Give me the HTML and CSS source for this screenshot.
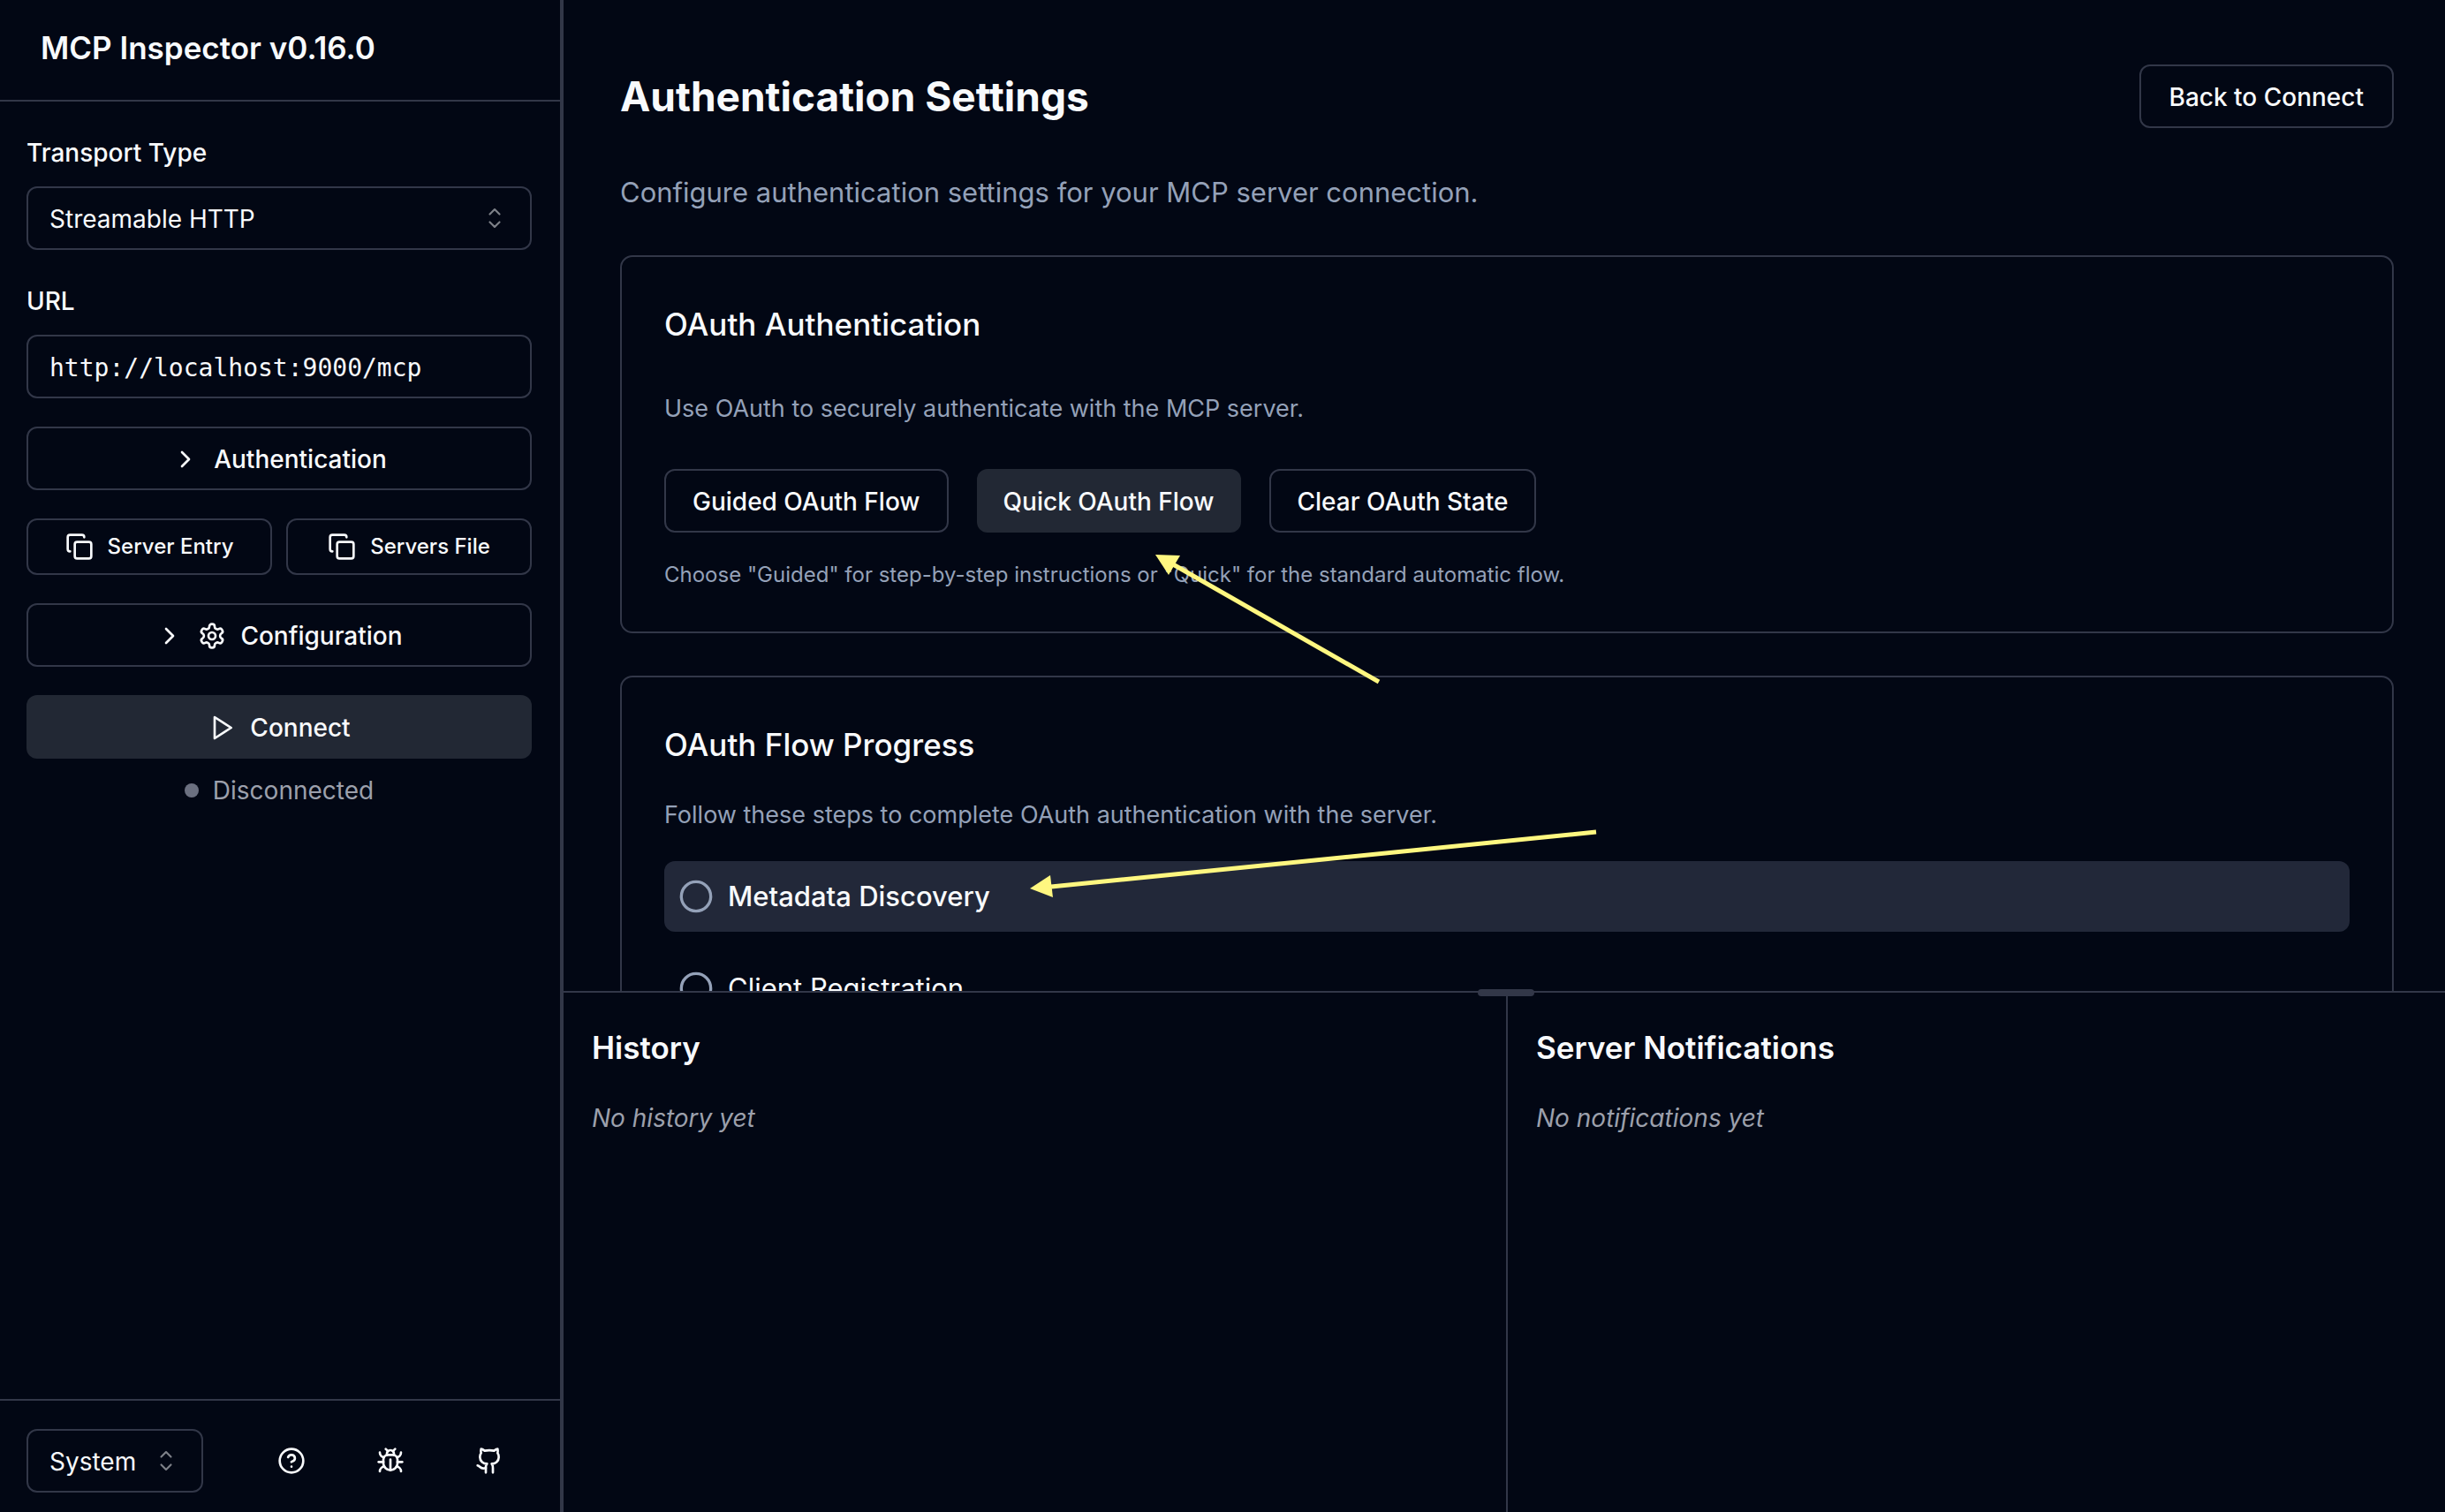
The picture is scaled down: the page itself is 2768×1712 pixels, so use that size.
FILE: index.html
```html
<!DOCTYPE html>
<html lang="en">
<head>
<meta charset="utf-8">
<title>MCP Inspector</title>
<meta name="viewport" content="width=device-width, initial-scale=1">
<link rel="stylesheet" href="styles.css">
</head>
<body>
<svg class="sprite" aria-hidden="true">
  <symbol id="i-chevron" viewBox="0 0 24 24"><path d="m9 18 6-6-6-6"/></symbol>
  <symbol id="i-copy" viewBox="0 0 24 24"><rect width="14" height="14" x="8" y="8" rx="2" ry="2"/><path d="M4 16c-1.1 0-2-.9-2-2V4c0-1.1.9-2 2-2h10c1.1 0 2 .9 2 2"/></symbol>
  <symbol id="i-settings" viewBox="0 0 24 24"><path d="M12.22 2h-.44a2 2 0 0 0-2 2v.18a2 2 0 0 1-1 1.73l-.43.25a2 2 0 0 1-2 0l-.15-.08a2 2 0 0 0-2.73.73l-.22.38a2 2 0 0 0 .73 2.73l.15.1a2 2 0 0 1 1 1.72v.51a2 2 0 0 1-1 1.74l-.15.09a2 2 0 0 0-.73 2.73l.22.38a2 2 0 0 0 2.73.73l.15-.08a2 2 0 0 1 2 0l.43.25a2 2 0 0 1 1 1.73V20a2 2 0 0 0 2 2h.44a2 2 0 0 0 2-2v-.18a2 2 0 0 1 1-1.73l.43-.25a2 2 0 0 1 2 0l.15.08a2 2 0 0 0 2.73-.73l.22-.39a2 2 0 0 0-.73-2.73l-.15-.08a2 2 0 0 1-1-1.74v-.5a2 2 0 0 1 1-1.74l.15-.09a2 2 0 0 0 .73-2.73l-.22-.38a2 2 0 0 0-2.73-.73l-.15.08a2 2 0 0 1-2 0l-.43-.25a2 2 0 0 1-1-1.73V4a2 2 0 0 0-2-2z"/><circle cx="12" cy="12" r="3"/></symbol>
  <symbol id="i-play" viewBox="0 0 24 24"><polygon points="6 3 20 12 6 21 6 3"/></symbol>
  <symbol id="i-help" viewBox="0 0 24 24"><circle cx="12" cy="12" r="10"/><path d="M9.09 9a3 3 0 0 1 5.83 1c0 2-3 3-3 3"/><path d="M12 17h.01"/></symbol>
  <symbol id="i-bug" viewBox="0 0 24 24"><path d="m8 2 1.88 1.88"/><path d="M14.12 3.88 16 2"/><path d="M9 7.13v-1a3.003 3.003 0 1 1 6 0v1"/><path d="M12 20c-3.3 0-6-2.7-6-6v-3a4 4 0 0 1 4-4h4a4 4 0 0 1 4 4v3c0 3.3-2.7 6-6 6"/><path d="M12 20v-9"/><path d="M6.53 9C4.6 8.8 3 7.1 3 5"/><path d="M6 13H2"/><path d="M3 21c0-2.1 1.7-3.9 3.8-4"/><path d="M20.97 5c0 2.1-1.6 3.8-3.5 4"/><path d="M22 13h-4"/><path d="M17.2 17c2.1.1 3.8 1.9 3.8 4"/></symbol>
  <symbol id="i-github" viewBox="0 0 24 24"><path d="M15 22v-4a4.8 4.8 0 0 0-1-3.5c3 0 6-2 6-5.5.08-1.25-.27-2.48-1-3.5.28-1.15.28-2.35 0-3.5 0 0-1 0-3 1.5-2.64-.5-5.36-.5-8 0C6 2 5 2 5 2c-.3 1.15-.3 2.35 0 3.5A5.403 5.403 0 0 0 4 9c0 3.5 3 5.5 6 5.5-.39.49-.68 1.05-.85 1.65-.17.6-.22 1.23-.15 1.85v4"/><path d="M9 18c-4.51 2-5-2-7-2"/></symbol>
  <symbol id="i-circle" viewBox="0 0 24 24"><circle cx="12" cy="12" r="10"/></symbol>
  <symbol id="i-sort" viewBox="0 0 15 15"><path d="M4.93 5.43 7.5 2.86l2.57 2.57M4.93 9.57l2.57 2.57 2.57-2.57"/></symbol>
</svg>

<div class="app">
  <aside class="sidebar">
    <header class="sidebar-header"><h1 class="brand">MCP Inspector v0.16.0</h1></header>

    <div class="sidebar-body">
      <div class="field">
        <label class="label" for="transport">Transport Type</label>
        <div class="select-wrap">
          <select class="control" id="transport"><option>Streamable HTTP</option><option>SSE</option><option>STDIO</option></select>
          <svg class="sort"><use href="#i-sort"/></svg>
        </div>
      </div>
      <div class="field">
        <label class="label" for="url">URL</label>
        <input class="control mono" id="url" type="text" value="http://localhost:9000/mcp">
      </div>
      <button class="btn wide" type="button"><svg class="icon"><use href="#i-chevron"/></svg>Authentication</button>
      <div class="pair">
        <button class="btn small" type="button"><svg class="icon"><use href="#i-copy"/></svg>Server Entry</button>
        <button class="btn small" type="button"><svg class="icon"><use href="#i-copy"/></svg>Servers File</button>
      </div>
      <button class="btn wide" type="button"><svg class="icon"><use href="#i-chevron"/></svg><svg class="icon"><use href="#i-settings"/></svg>Configuration</button>
      <div class="connect">
        <button class="btn primary wide" type="button"><svg class="icon"><use href="#i-play"/></svg>Connect</button>
        <p class="status"><span class="dot"></span>Disconnected</p>
      </div>
    </div>

    <footer class="sidebar-footer">
      <div class="select-wrap theme">
        <select class="control" aria-label="Theme"><option>System</option><option>Light</option><option>Dark</option></select>
        <svg class="sort"><use href="#i-sort"/></svg>
      </div>
      <nav class="links">
        <a class="icon-link" href="#help" aria-label="Help"><svg class="icon"><use href="#i-help"/></svg></a>
        <a class="icon-link" href="#debug" aria-label="Debugging guide"><svg class="icon"><use href="#i-bug"/></svg></a>
        <a class="icon-link" href="#github" aria-label="GitHub"><svg class="icon"><use href="#i-github"/></svg></a>
      </nav>
    </footer>
  </aside>

  <main class="main">
    <section class="settings">
      <div class="settings-head">
        <h2 class="title">Authentication Settings</h2>
        <button class="btn" type="button">Back to Connect</button>
      </div>
      <p class="lead">Configure authentication settings for your MCP server connection.</p>

      <article class="card oauth">
        <h3 class="card-title">OAuth Authentication</h3>
        <p class="desc">Use OAuth to securely authenticate with the MCP server.</p>
        <div class="actions">
          <button class="btn" type="button">Guided OAuth Flow</button>
          <button class="btn primary" type="button">Quick OAuth Flow</button>
          <button class="btn" type="button">Clear OAuth State</button>
        </div>
        <p class="hint">Choose "Guided" for step-by-step instructions or "Quick" for the standard automatic flow.</p>
      </article>

      <article class="card progress">
        <h3 class="card-title">OAuth Flow Progress</h3>
        <p class="desc">Follow these steps to complete OAuth authentication with the server.</p>
        <ol class="steps">
          <li class="step current"><svg class="step-icon"><use href="#i-circle"/></svg>Metadata Discovery</li>
          <li class="step"><svg class="step-icon"><use href="#i-circle"/></svg>Client Registration</li>
        </ol>
      </article>

      <svg class="arrows" viewBox="0 0 1200 1120" aria-hidden="true">
        <path class="shaft" d="M923 772 690 639"/>
        <path class="head" d="M670 628 698 629 685 651Z"/>
        <path class="shaft" d="M1169 942 552 1004"/>
        <path class="head" d="M528 1006 551 991 554 1016Z"/>
      </svg>
    </section>

    <div class="bottom">
      <div class="handle"></div>
      <section class="panel">
        <h2 class="panel-title">History</h2>
        <p class="empty">No history yet</p>
      </section>
      <section class="panel">
        <h2 class="panel-title">Server Notifications</h2>
        <p class="empty">No notifications yet</p>
      </section>
    </div>
  </main>
</div>
</body>
</html>
```
FILE: styles.css
```css
:root {
  --bg: #020714;
  --border: #323748;
  --text: #f8fafc;
  --muted: #94a1b8;
  --gray: #9ca0ac;
  --fill: #222834;
  --accent: #222839;
  --arrow: #fff780;
}

* { box-sizing: border-box; margin: 0; }

body {
  background: var(--bg);
  color: var(--text);
  font: 400 28px/40px Inter, "Liberation Sans", sans-serif;
}

button, select, input { font: inherit; color: inherit; }

.sprite { position: absolute; width: 0; height: 0; }

svg { fill: none; stroke: currentColor; stroke-width: 2; stroke-linecap: round; stroke-linejoin: round; }

.app { display: flex; height: 100vh; overflow: hidden; }

/* Sidebar */
.sidebar {
  display: flex;
  flex-direction: column;
  flex: none;
  width: 638px;
  border-right: 4px solid var(--border);
}
.sidebar-header { padding: 26px 46px 31px; border-bottom: 2px solid var(--border); }
.brand { font-size: 35px; line-height: 56px; font-weight: 600; }
.sidebar-body {
  flex: 1;
  display: flex;
  flex-direction: column;
  gap: 32px;
  padding: 32px 32px 32px 30px;
}
.field { display: flex; flex-direction: column; gap: 18px; padding-top: 6px; }
.label { font-weight: 500; }

.control {
  width: 100%;
  height: 72px;
  padding: 2px 24px 0;
  border: 2px solid var(--border);
  border-radius: 12px;
  background: transparent;
  appearance: none;
}
.mono { font-family: "DejaVu Sans Mono", monospace; }
.select-wrap { position: relative; }
.sort {
  position: absolute;
  right: 26px;
  top: 20px;
  width: 32px;
  height: 32px;
  stroke-width: 1;
  opacity: 0.5;
}

.btn {
  display: flex;
  align-items: center;
  justify-content: center;
  gap: 16px;
  height: 72px;
  padding: 2px 32px 0;
  border: 2px solid var(--border);
  border-radius: 12px;
  background: transparent;
  font-weight: 500;
  white-space: nowrap;
}
.wide { width: 100%; }
.small { flex: 1; height: 64px; padding: 0; font-size: 24px; }
.primary { background: var(--fill); border: 0; }
.icon { width: 32px; height: 32px; flex: none; }
.pair { display: flex; gap: 16px; }
.connect { display: flex; flex-direction: column; gap: 16px; }
.status { display: flex; align-items: center; justify-content: center; gap: 16px; color: var(--gray); }
.dot { width: 16px; height: 16px; border-radius: 50%; background: #6b7080; }

.sidebar-footer {
  display: flex;
  align-items: center;
  gap: 64px;
  padding: 32px 32px 22px 30px;
  border-top: 2px solid var(--border);
}
.theme { width: 200px; }
.links { display: flex; gap: 40px; }
.icon-link {
  display: flex;
  align-items: center;
  justify-content: center;
  width: 72px;
  height: 72px;
  color: inherit;
}

/* Main */
.main { flex: 1; display: flex; flex-direction: column; min-width: 0; }
.settings { position: relative; flex: 1; min-height: 0; overflow: hidden; padding: 73px 58px 0 64px; }
.settings-head { display: flex; align-items: center; justify-content: space-between; }
.title { font-size: 46px; line-height: 64px; font-weight: 700; }
.lead { margin: 49px 0 47px; font-size: 31px; line-height: 48px; color: var(--muted); }
.card {
  border: 2px solid var(--border);
  border-radius: 14px;
  padding: 48px;
}
.card + .card { margin-top: 48px; }
.card-title { font-size: 35px; line-height: 56px; font-weight: 500; }
.desc { font-size: 27px; color: var(--muted); }
.oauth .card-title { margin-bottom: 48px; }
.actions { display: flex; gap: 32px; margin: 48px 0 32px; }
.actions .btn { padding: 2px 30px 0; }
.hint { font-size: 24px; line-height: 32px; color: var(--muted); }
.progress .card-title { margin-bottom: 32px; }
.steps { list-style: none; padding: 0; margin-top: 32px; display: flex; flex-direction: column; gap: 24px; }
.step {
  display: flex;
  align-items: center;
  gap: 16px;
  height: 80px;
  padding: 16px;
  border-radius: 12px;
  font-size: 31px;
}
.current { background: var(--accent); font-weight: 500; }
.step-icon { width: 40px; height: 40px; color: var(--muted); }

.arrows { position: absolute; left: 0; top: 0; width: 1200px; height: 1120px; pointer-events: none; }
.shaft { stroke: var(--arrow); stroke-width: 5; stroke-linecap: butt; }
.head { fill: var(--arrow); stroke: none; }

/* The lower pane runs slightly past the window edge */
.bottom {
  position: relative;
  display: grid;
  grid-template-columns: 1fr 1fr;
  height: 590px;
  margin-right: -4px;
  border-top: 2px solid var(--border);
}
.handle {
  position: absolute;
  left: 50%;
  top: -4px;
  width: 64px;
  height: 8px;
  margin-left: -32px;
  border-radius: 4px;
  background: var(--border);
}
.panel { padding: 34px 32px; }
.panel + .panel { border-left: 2px solid var(--border); }
.panel-title { font-size: 35px; line-height: 56px; font-weight: 600; }
.empty { margin-top: 32px; font-style: italic; color: var(--gray); }
```
